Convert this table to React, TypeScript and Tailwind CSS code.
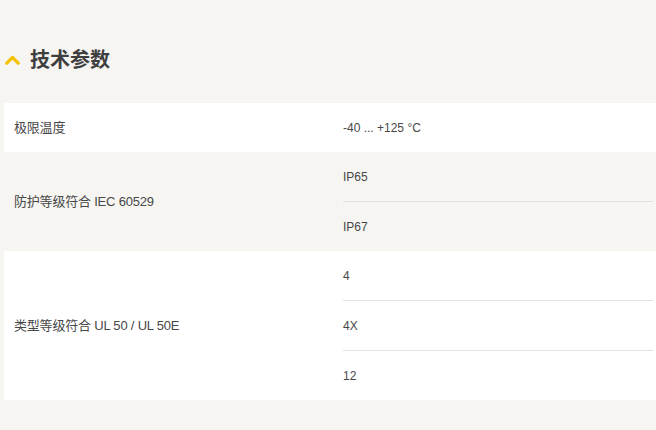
const specs = [
  { label: '极限温度', values: ['-40 ... +125 °C'], bg: 'bg-white' },
  { label: '防护等级符合 IEC 60529', values: ['IP65', 'IP67'], bg: 'bg-[#f6f5f2]' },
  { label: '类型等级符合 UL 50 / UL 50E', values: ['4', '4X', '12'], bg: 'bg-white' },
];

const App = () => {
  return (
    <div
      className="min-h-[430px] w-[656px] bg-[#f6f5f2] pt-[46px] pb-[30px] pl-[4px] text-[#474747]"
      style={{ fontFamily: '"Liberation Sans", "Noto Sans CJK SC", sans-serif' }}
    >
      <div className="flex h-[28px] items-center gap-[10px] pl-[1px]">
        <svg width="15" height="10" viewBox="0 0 15 10">
          <path d="M1.8 8.2 L7.5 2.5 L13.2 8.2" fill="none" stroke="#f5c200" strokeWidth="3.2" strokeLinecap="round" strokeLinejoin="round" />
        </svg>
        <h2 className="text-[20px] font-bold leading-none text-[#3f3f3f]">技术参数</h2>
      </div>

      <div className="mt-[29px]">
        {specs.map((row) => (
          <div key={row.label} className={`flex ${row.bg}`}>
            <div className="flex w-[339px] items-center pl-[10px] pt-[1px] text-[13px] tracking-[-0.2px]">{row.label}</div>
            <div className="flex-1 pr-[3px]">
              {row.values.map((v, i) => (
                <div
                  key={v}
                  className={`flex items-center text-[12px] ${
                    i < row.values.length - 1 ? 'h-[50px] border-b border-[#e2e2e0]' : 'h-[49px]'
                  }`}
                >
                  {v}
                </div>
              ))}
            </div>
          </div>
        ))}
      </div>
    </div>
  );
};

export default App;
